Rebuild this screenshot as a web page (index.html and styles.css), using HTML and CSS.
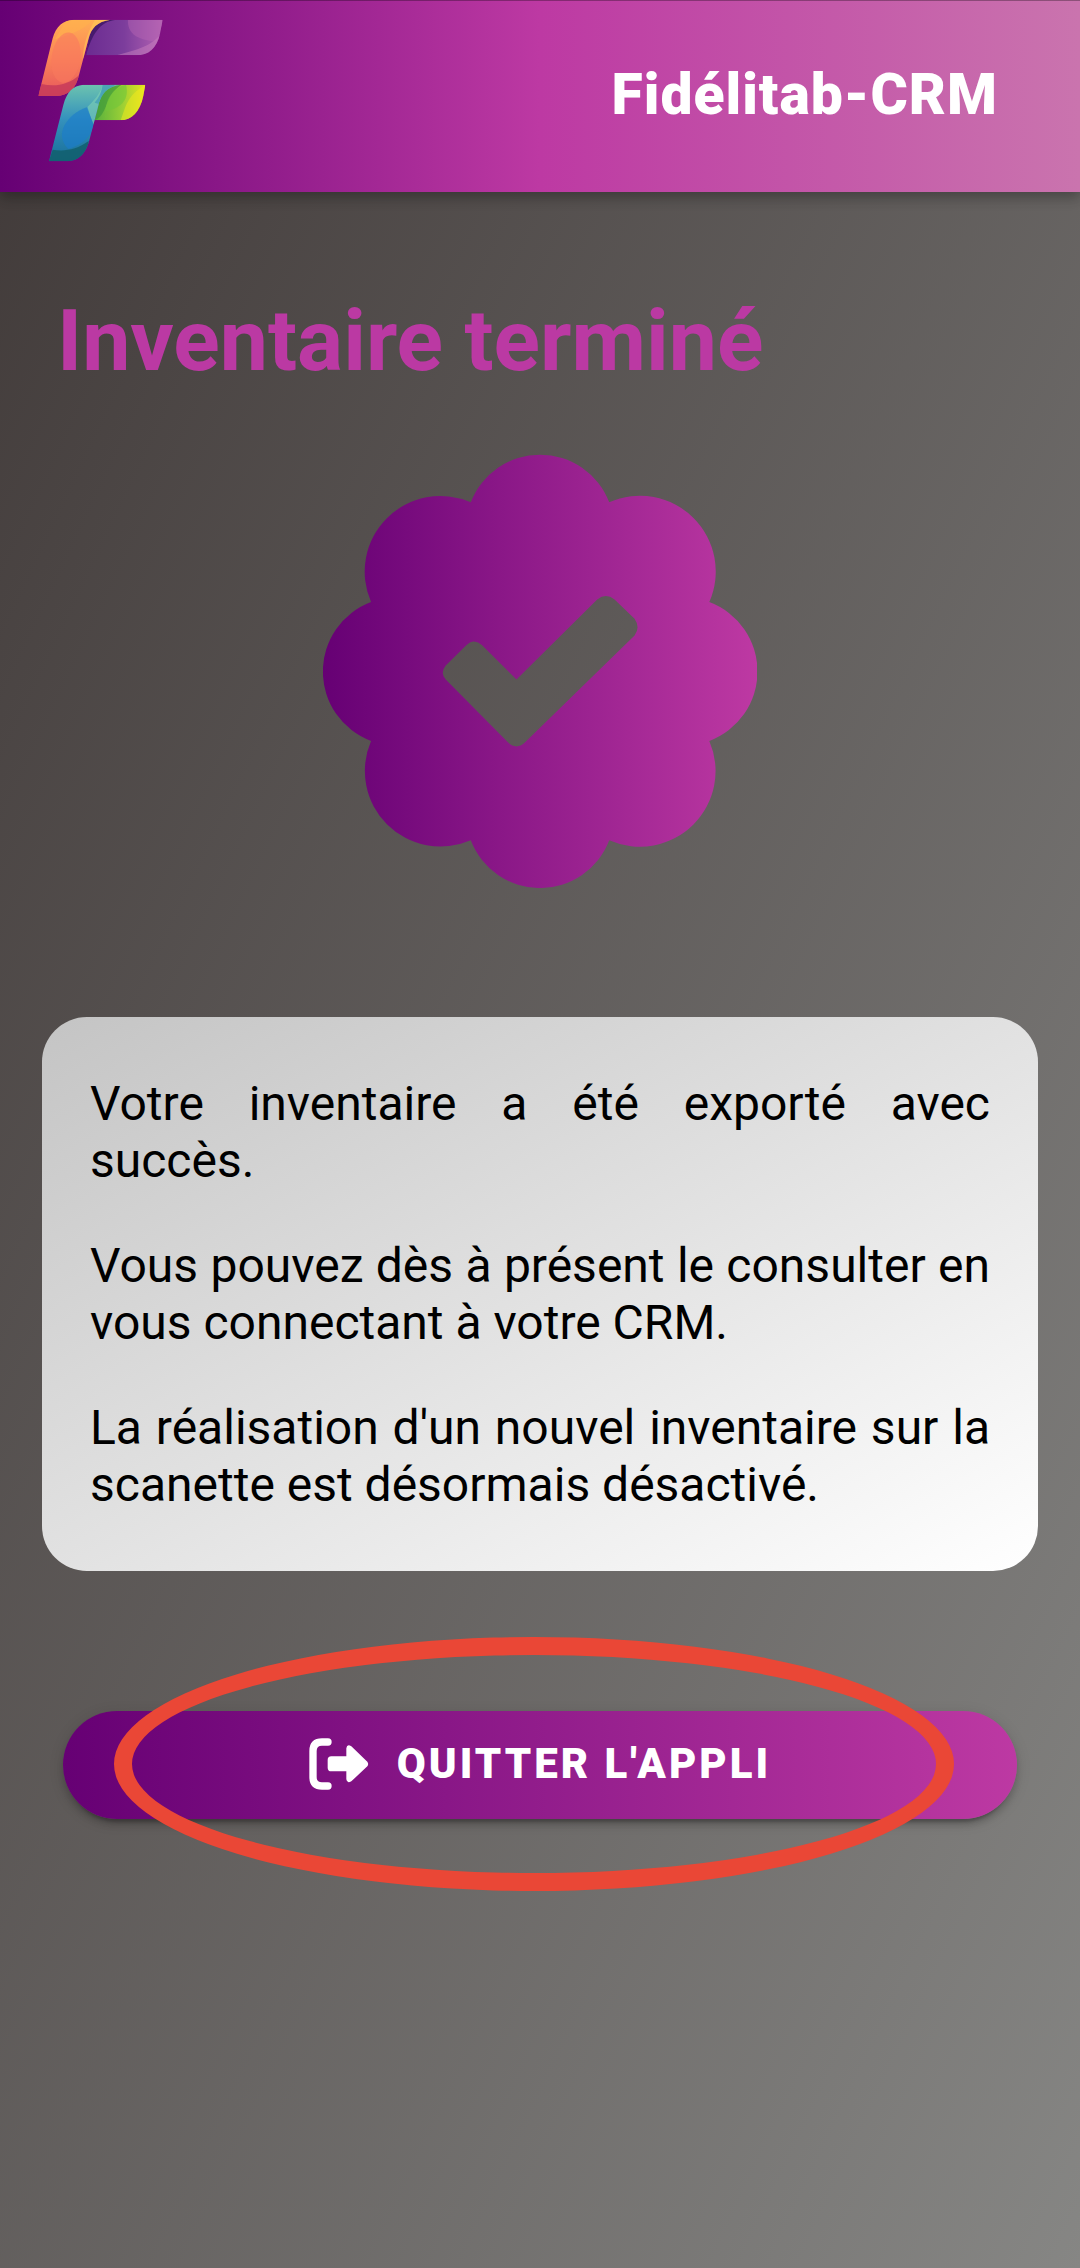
FILE: index.html
```html
<!DOCTYPE html>
<html lang="fr">
<head>
  <meta charset="utf-8">
  <meta name="viewport" content="width=device-width, initial-scale=1">
  <title>Fidélitab-CRM</title>
  <link rel="stylesheet" href="styles.css">
</head>
<body>
  <header class="toolbar">
    <svg class="logo" viewBox="114 54 375 429" role="img" aria-label="Fidélitab">
      <defs>
        <linearGradient id="orange" x1="0" y1="0" x2="0" y2="1">
          <stop offset="0" stop-color="#ffb153"/><stop offset=".5" stop-color="#fb8458"/><stop offset="1" stop-color="#e5555d"/>
        </linearGradient>
        <linearGradient id="violet" x1="0" y1="0" x2="1" y2="0">
          <stop offset="0" stop-color="#6a2a90"/><stop offset=".5" stop-color="#7c3d9c"/><stop offset="1" stop-color="#b765b4"/>
        </linearGradient>
        <linearGradient id="blue" x1="0" y1="0" x2="0" y2="1">
          <stop offset="0" stop-color="#6fc6ae"/><stop offset=".45" stop-color="#3592bd"/><stop offset="1" stop-color="#176d98"/>
        </linearGradient>
        <linearGradient id="green" x1="0" y1="0" x2="1" y2="0">
          <stop offset="0" stop-color="#55ad3d"/><stop offset=".5" stop-color="#94cd37"/><stop offset="1" stop-color="#ece51d"/>
        </linearGradient>
        <clipPath id="top-stem"><path d="M222 56H332C290 62 274 82 266 112L238 218C228 262 208 284 165 285H115L158 112C168 76 188 58 222 56Z"/></clipPath>
        <clipPath id="top-arm"><path d="M300 56H488L480 98C470 142 446 163 408 163H258L268 110C274 80 284 64 300 56Z"/></clipPath>
        <clipPath id="low-stem"><path d="M250 251H362C320 256 302 280 294 318L270 410C258 460 236 480 196 481H147L190 312C200 274 218 254 250 251Z"/></clipPath>
        <clipPath id="low-arm"><path d="M330 251H436L430 284C420 332 396 358 360 358H284L298 300C304 278 314 258 330 251Z"/></clipPath>
      </defs>
      <g clip-path="url(#top-arm)">
        <path fill="url(#violet)" d="M250 50H495V170H250Z"/>
        <path fill="#3a1460" opacity=".75" d="M258 163C276 100 300 62 345 57H290L250 90Z"/>
        <path fill="#b765b4" opacity=".45" d="M384 56C382 92 402 116 470 122L492 56Z"/>
        <path fill="#cf83c2" opacity=".45" d="M488 90C460 136 410 146 350 163H490Z"/>
      </g>
      <g clip-path="url(#top-stem)">
        <path fill="url(#orange)" d="M110 50H340V290H110Z"/>
        <path fill="#ffcf55" opacity=".5" d="M285 56C260 100 250 130 248 175L340 56Z"/>
        <path fill="#ffb04d" opacity=".6" d="M165 115C210 100 245 90 280 56H200Z"/>
        <ellipse cx="198" cy="170" rx="43" ry="76" transform="rotate(8 198 170)" fill="#f97a5e" opacity=".6"/>
        <path fill="#c2355a" opacity=".75" d="M110 290L124 249C165 258 205 252 238 222V290Z"/>
      </g>
      <g clip-path="url(#low-arm)">
        <path fill="url(#green)" d="M280 245H440V362H280Z"/>
        <path fill="#3f9a3a" opacity=".7" d="M286 358C330 330 310 286 365 251H290Z"/>
        <path fill="#72c63a" opacity=".6" d="M318 358C310 300 335 262 378 251C388 290 370 320 318 330Z"/>
        <path fill="#f4ea1c" opacity=".5" d="M436 252C380 284 378 316 362 358H436Z"/>
      </g>
      <g clip-path="url(#low-stem)">
        <path fill="url(#blue)" d="M140 245H370V485H140Z"/>
        <path fill="#7fd1b4" opacity=".6" d="M260 320C280 300 300 280 308 251L296 340L282 372Z"/>
        <path fill="#3f9bb6" opacity=".7" d="M308 251C304 275 296 290 284 305L300 310L345 251Z"/>
        <path fill="#1b7ccb" opacity=".65" d="M262 318C200 340 160 400 205 444C250 430 276 404 280 372Z"/>
        <path fill="#125f6c" opacity=".85" d="M145 485L158 446C194 452 230 446 266 420V485Z"/>
      </g>
    </svg>
    <span class="brand">Fidélitab-CRM</span>
  </header>

  <main class="content">
    <h1 class="heading">Inventaire terminé</h1>

    <svg class="badge" viewBox="70 72 1301 1301" aria-hidden="true">
      <defs>
        <linearGradient id="badge-fill" x1="0" y1="0" x2="1" y2="0">
          <stop offset="0" stop-color="#660074"/><stop offset="1" stop-color="#be39a3"/>
        </linearGradient>
      </defs>
      <path fill="url(#badge-fill)" fill-rule="evenodd" d="M513 217A222 222 0 0 1 928 217A227 227 0 0 1 1228 516A222 222 0 0 1 1228 932A227 227 0 0 1 928 1230A222 222 0 0 1 513 1230A227 227 0 0 1 214 932A222 222 0 0 1 214 516A227 227 0 0 1 513 217ZM650 748L892 508Q918 488 944 508L1004 566Q1022 592 1004 616L675 937Q650 960 625 937L438 748Q420 728 438 706L498 647Q522 622 547 645Z"/>
    </svg>

    <section class="card">
      <p>Votre inventaire a été exporté avec succès.</p>
      <p>Vous pouvez dès à présent le consulter en vous connectant à votre CRM.</p>
      <p>La réalisation d'un nouvel inventaire sur la scanette est désormais désactivé.</p>
    </section>

    <div class="action">
      <button class="quit" type="button">
        <svg class="quit-icon" viewBox="62 119 180 156" aria-hidden="true">
          <path fill="none" stroke="#fff" stroke-width="22" stroke-linecap="round" stroke-linejoin="round" d="M119 131H101Q74 131 74 158V236Q74 263 101 263H119"/>
          <path fill="#fff" d="M129 174H174V150Q176 136 189 144L237 190Q242 197 237 204L189 249Q176 257 174 243V219H129Q118 219 118 208V185Q118 174 129 174Z"/>
        </svg>
        Quitter l'appli
      </button>
      <span class="highlight" aria-hidden="true"></span>
    </div>
  </main>
</body>
</html>
```
FILE: styles.css
```css
* {
  box-sizing: border-box;
}

body {
  margin: 0;
  min-height: 100vh;
  font-family: Roboto, sans-serif;
  color: #000;
  background: linear-gradient(to bottom right, #403938, #868684);
}

.toolbar {
  display: flex;
  align-items: center;
  justify-content: space-between;
  height: 192px;
  padding: 0 82px 4px 38px;
  border-top: 1px solid #0000004d;
  background: linear-gradient(to right, #660074, #bd39a3 50%, #ca74ae) border-box;
  box-shadow: 0 6px 12px #00000033, 0 3px 15px #0000001f;
}

.logo {
  width: 125px;
  height: 143px;
  margin-bottom: 8px;
}

.brand {
  font-size: 57px;
  font-weight: 900;
  letter-spacing: 1px;
  line-height: 66px;
  color: #fff;
}

.content {
  padding: 96px 42px;
}

.heading {
  margin: 0 15px;
  font-size: 86px;
  font-weight: 700;
  line-height: 106px;
  color: #bb39a3;
}

.badge {
  display: block;
  width: 434px;
  height: 434px;
  margin: 60px auto 129px;
}

.card {
  padding: 58px 48px;
  border-radius: 45px;
  background: linear-gradient(to bottom right, #c4c4c4, #fff);
  font-size: 48px;
  line-height: 57px;
  text-align: justify;
}

.card p {
  margin: 0;
}

.card p + p {
  margin-top: 48px;
}

.action {
  position: relative;
  margin: 140px 21px 0;
}

.quit {
  display: flex;
  align-items: center;
  justify-content: center;
  gap: 28px;
  width: 100%;
  height: 108px;
  padding: 0 0 2px;
  border: 0;
  border-radius: 54px;
  background: linear-gradient(to right, #660074, #bd39a3);
  box-shadow: 0 9px 3px -6px #00000033, 0 6px 6px #00000024, 0 3px 15px #0000001f;
  font-family: inherit;
  font-size: 42px;
  font-weight: 900;
  letter-spacing: 3px;
  line-height: 48px;
  text-transform: uppercase;
  color: #fff;
}

.quit-icon {
  width: 60px;
  height: 52px;
}

.highlight {
  position: absolute;
  inset: -74px 63px -72px 51px;
  border: 18px solid #ea4736;
  border-radius: 50%;
  pointer-events: none;
}
```
